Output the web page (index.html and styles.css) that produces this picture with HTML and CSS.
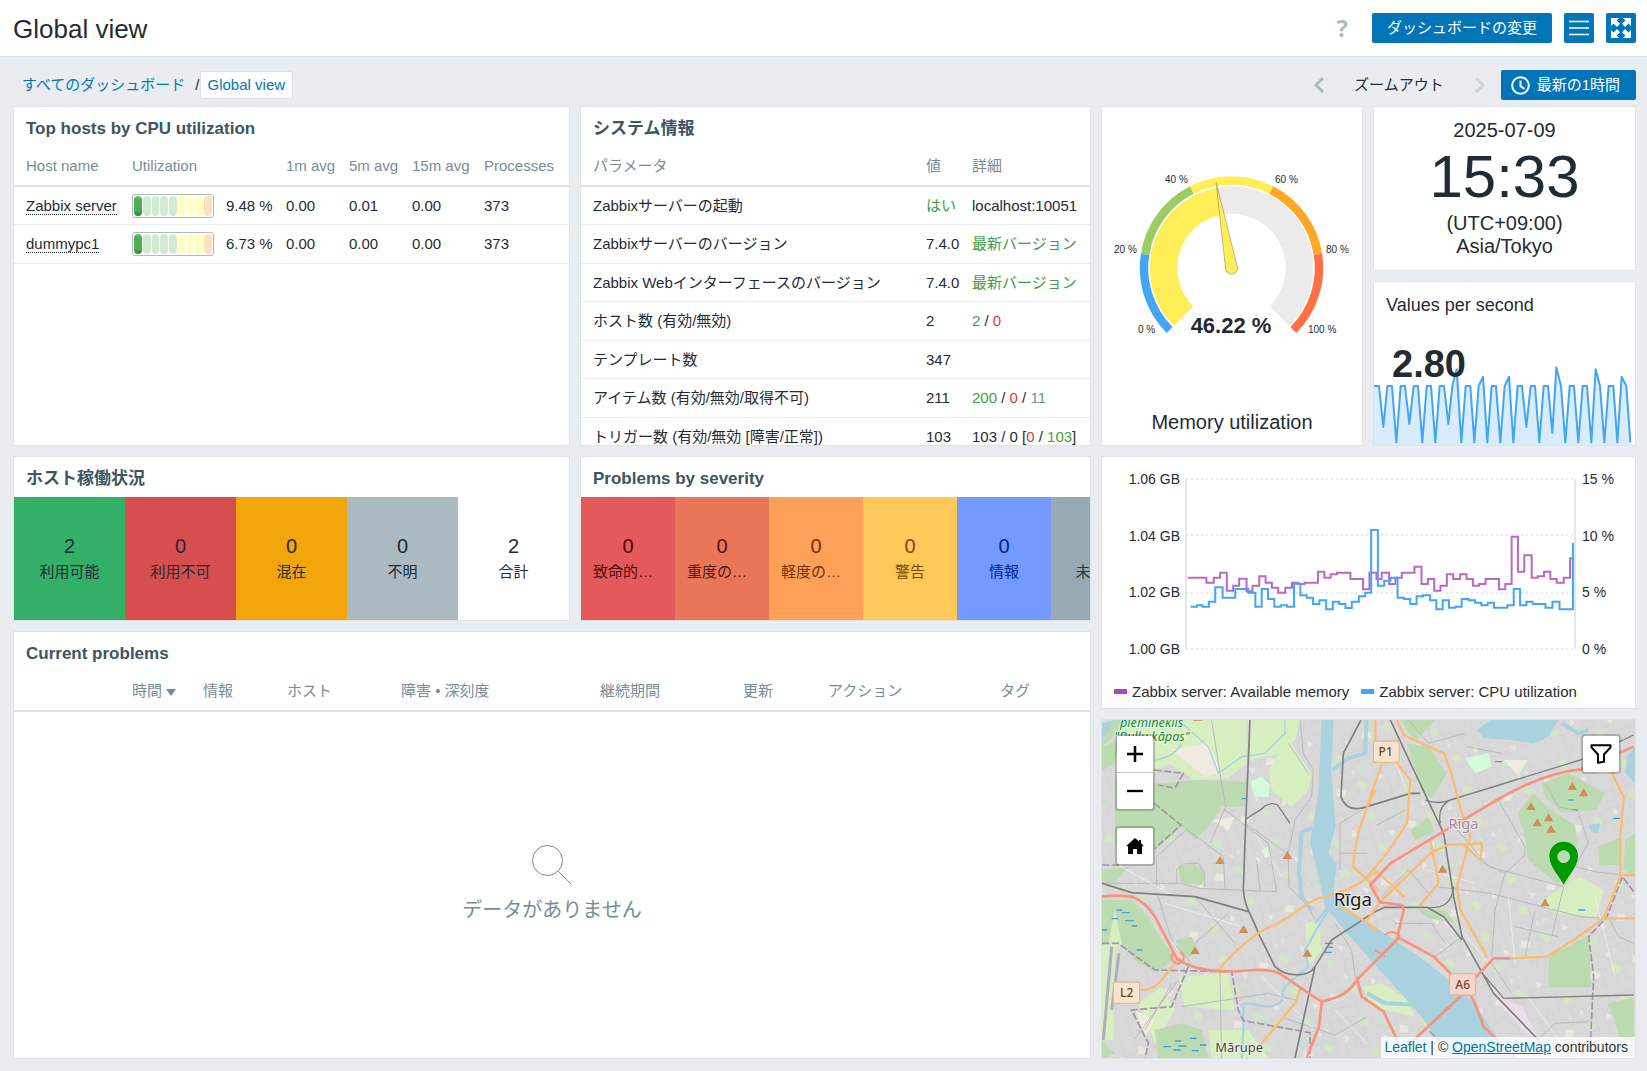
FILE: index.html
```
<!DOCTYPE html>
<html lang="ja">
<head>
    <meta charset="UTF-8">
    <meta name="viewport" content="width=device-width, initial-scale=1.0">
    <title>Global view</title>
    <link rel="stylesheet" href="styles.css">
</head>
<body>
    <header class="topbar">
        <h1>Global view</h1>
        <div class="topbar-actions">
            <a href="#" class="help" aria-label="Help">?</a>
            <button type="button" class="btn">ダッシュボードの変更</button>
            <button type="button" class="btn btn-icon" aria-label="Menu">
                <svg width="20" height="20" viewBox="0 0 20 20"><path d="M0 3.5h20M0 10h20M0 16.5h20" stroke="#fff" stroke-width="1.3"/></svg>
            </button>
            <button type="button" class="btn btn-icon" aria-label="Kiosk mode">
                <svg width="20" height="20" viewBox="0 0 20 20" fill="#fff"><path d="M0 0h8L5.6 2.4 9 5.8 6 9 2.5 5.5 0 8zM20 0v8l-2.5-2.5L14 9l-3-3.2 3.4-3.4L12 0zM0 20v-8l2.5 2.5L6 11l3 3.2-3.4 3.4L8 20zM20 20h-8l2.4-2.4L11 14.2 14 11l3.5 3.5L20 12z"/></svg>
            </button>
        </div>
    </header>

    <div class="subbar">
        <nav class="breadcrumbs">
            <a href="#">すべてのダッシュボード</a>
            <span>/</span>
            <a href="#" class="selected">Global view</a>
        </nav>
        <div class="time-nav">
            <button type="button" class="chevron" aria-label="Previous">
                <svg width="10" height="16" viewBox="0 0 10 16"><path d="M9 1L2 8l7 7" fill="none" stroke="#acbbc2" stroke-width="3"/></svg>
            </button>
            <button type="button" class="zoom-out">ズームアウト</button>
            <button type="button" class="chevron" aria-label="Next" disabled>
                <svg width="10" height="16" viewBox="0 0 10 16"><path d="M1 1l7 7-7 7" fill="none" stroke="#cfd6da" stroke-width="3"/></svg>
            </button>
            <button type="button" class="btn btn-time">
                <svg width="19" height="19" viewBox="0 0 19 19" fill="none" stroke="#fff" stroke-width="2"><circle cx="9.5" cy="9.5" r="8.3"/><path d="M9.5 4.5v5.5l4 3"/></svg>
                最新の1時間
            </button>
        </div>
    </div>

    <main class="dashboard">
        <div class="column column-left">
            <section class="widget">
                <h2>Top hosts by CPU utilization</h2>
                <table class="hosts-table">
                    <thead>
                        <tr><th class="col-host">Host name</th><th class="col-util">Utilization</th><th class="col-avg">1m avg</th><th class="col-avg">5m avg</th><th class="col-avg15">15m avg</th><th>Processes</th></tr>
                    </thead>
                    <tbody>
                        <tr>
                            <td><a href="#" class="host">Zabbix server</a></td>
                            <td><div class="util"><span class="bar"><i class="on"></i><i></i><i></i><i></i><i></i><i class="mid"></i><i class="mid"></i><i class="mid"></i><i class="top"></i></span>9.48 %</div></td>
                            <td>0.00</td><td>0.01</td><td>0.00</td><td>373</td>
                        </tr>
                        <tr>
                            <td><a href="#" class="host">dummypc1</a></td>
                            <td><div class="util"><span class="bar"><i class="on"></i><i></i><i></i><i></i><i></i><i class="mid"></i><i class="mid"></i><i class="mid"></i><i class="top"></i></span>6.73 %</div></td>
                            <td>0.00</td><td>0.00</td><td>0.00</td><td>373</td>
                        </tr>
                    </tbody>
                </table>
            </section>

            <section class="widget">
                <h2>システム情報</h2>
                <table class="system-table">
                    <thead>
                        <tr><th>パラメータ</th><th class="col-value">値</th><th class="col-details">詳細</th></tr>
                    </thead>
                    <tbody>
                        <tr><td>Zabbixサーバーの起動</td><td class="green">はい</td><td>localhost:10051</td></tr>
                        <tr><td>Zabbixサーバーのバージョン</td><td>7.4.0</td><td class="green">最新バージョン</td></tr>
                        <tr><td>Zabbix Webインターフェースのバージョン</td><td>7.4.0</td><td class="green">最新バージョン</td></tr>
                        <tr><td>ホスト数 (有効/無効)</td><td>2</td><td><span class="green">2</span> / <span class="red">0</span></td></tr>
                        <tr><td>テンプレート数</td><td>347</td><td></td></tr>
                        <tr><td>アイテム数 (有効/無効/取得不可)</td><td>211</td><td><span class="green">200</span> / <span class="red">0</span> / <span class="grey">11</span></td></tr>
                        <tr><td>トリガー数 (有効/無効 [障害/正常])</td><td>103</td><td>103 / 0 [<span class="red">0</span> / <span class="green">103</span>]</td></tr>
                    </tbody>
                </table>
            </section>

            <section class="widget">
                <h2>ホスト稼働状況</h2>
                <div class="tiles">
                    <div class="tile available"><b>2</b><span>利用可能</span></div>
                    <div class="tile unavailable"><b>0</b><span>利用不可</span></div>
                    <div class="tile mixed"><b>0</b><span>混在</span></div>
                    <div class="tile unknown"><b>0</b><span>不明</span></div>
                    <div class="tile"><b>2</b><span>合計</span></div>
                </div>
            </section>

            <section class="widget">
                <h2>Problems by severity</h2>
                <div class="tiles severity">
                    <div class="tile disaster"><b>0</b><span>致命的な障害</span></div>
                    <div class="tile high"><b>0</b><span>重度の障害</span></div>
                    <div class="tile average"><b>0</b><span>軽度の障害</span></div>
                    <div class="tile warning"><b>0</b><span>警告</span></div>
                    <div class="tile info"><b>0</b><span>情報</span></div>
                    <div class="tile not-classified"><b>0</b><span>未分類</span></div>
                </div>
            </section>

            <section class="widget problems">
                <h2>Current problems</h2>
                <table class="problems-table">
                    <thead>
                        <tr><th class="p-empty"></th><th class="p-time">時間 <i class="arrow-down"></i></th><th class="p-info">情報</th><th class="p-host">ホスト</th><th class="p-problem">障害 • 深刻度</th><th class="p-duration">継続期間</th><th class="p-update">更新</th><th class="p-actions">アクション</th><th>タグ</th></tr>
                    </thead>
                </table>
                <div class="no-data">
                    <svg width="40" height="40" viewBox="0 0 40 40" fill="none" stroke="#768d99"><circle cx="15.5" cy="15.5" r="15"/><path d="M26.5 26.5L39 39"/></svg>
                    <p>データがありません</p>
                </div>
            </section>
        </div>

        <div class="column column-right">
            <section class="widget gauge">
                <svg viewBox="0 0 260 284">
                    <g transform="translate(129.5 161)" fill="none">
                        <g stroke-width="8.5">
                            <path stroke="#42a5f5" d="M-61.9 61.9A87.5 87.5 0 0 1-86.4-13.7"/>
                            <path stroke="#9ccc65" d="M-86.4-13.7A87.5 87.5 0 0 1-39.7-78"/>
                            <path stroke="#ffee58" d="M-39.7-78A87.5 87.5 0 0 1 39.7-78"/>
                            <path stroke="#ffa726" d="M39.7-78A87.5 87.5 0 0 1 86.4-13.7"/>
                            <path stroke="#ff7043" d="M86.4-13.7A87.5 87.5 0 0 1 61.9 61.9"/>
                        </g>
                        <path stroke="#ebebeb" stroke-width="27.5" d="M-12-66.8A67.8 67.8 0 0 1 48 48"/>
                        <path stroke="#ffee58" stroke-width="27.5" d="M-48 48A67.8 67.8 0 0 1-12-66.8"/>
                        <path fill="#ffee58" stroke="#000" stroke-opacity=".25" d="M0-87L6 0A6 6 0 0 1-6 0z" transform="rotate(-10.2)"/>
                    </g>
                    <g class="gauge-ticks">
                        <text x="36" y="226">0 %</text>
                        <text x="12" y="146">20 %</text>
                        <text x="63" y="76">40 %</text>
                        <text x="173" y="76">60 %</text>
                        <text x="224" y="146">80 %</text>
                        <text x="206" y="226">100 %</text>
                    </g>
                    <text class="gauge-value" x="129" y="226">46.22 %</text>
                </svg>
                <p>Memory utilization</p>
            </section>

            <section class="widget clock">
                <span>2025-07-09</span>
                <strong>15:33</strong>
                <span>(UTC+09:00)</span>
                <span>Asia/Tokyo</span>
            </section>

            <section class="widget item-value">
                <p>Values per second</p>
                <strong>2.80</strong>
                <svg viewBox="27 285 783 239" preserveAspectRatio="none">
                    <path fill="#d9ecfc" d="M27 348H42L55 470 67 348H81L94 516 107 348H120L133 461 146 348H159L172 516 185 348H198L211 516 224 348H237L250 461 262 348 275 298 289 516 302 348H316L328 516 341 348 354 320 367 516 380 348H393L406 516 419 348 432 320 445 516 458 348H471L484 470 497 348H510L523 516 536 348H549L562 488 574 292 588 348 601 516 614 348H627L640 516 653 348H666L679 516 692 298 705 348 718 516 731 348H745L757 516 770 320 784 348 796 524H27z"/>
                    <path class="spark" d="M27 348H42L55 470 67 348H81L94 516 107 348H120L133 461 146 348H159L172 516 185 348H198L211 516 224 348H237L250 461 262 348 275 298 289 516 302 348H316L328 516 341 348 354 320 367 516 380 348H393L406 516 419 348 432 320 445 516 458 348H471L484 470 497 348H510L523 516 536 348H549L562 488 574 292 588 348 601 516 614 348H627L640 516 653 348H666L679 516 692 298 705 348 718 516 731 348H745L757 516 770 320 784 348 796 516"/>
                </svg>
            </section>

            <section class="widget graph">
                <div class="plot">
                    <div class="axis axis-left"><span>1.06 GB</span><span>1.04 GB</span><span>1.02 GB</span><span>1.00 GB</span></div>
                    <svg viewBox="259 88 1105 510" preserveAspectRatio="none">
                        <path class="gridline" d="M259 88H1364M259 256H1364M259 430H1364M259 598H1364"/>
                        <path class="axis-line" d="M259 88V598M1364 88V598"/>
                        <path class="series memory" d="M264 384H317V399H338V384H356V369H375V423H393V408H410V387H431V425H448V408H467V380H485V399H503V414H521V429H541V414H560V399H578V403H596V399H634V366H652V384H670V374H688V369H726V388H762V419H780V369H800V388H815V369H836V403H854V384H872V369H908V351H928V403H946V388H964V423H982V408H1000V374H1018V388H1038V374H1056V388H1074V408H1092V403H1110V388H1148V419H1166V403H1184V261H1202V366H1220V317H1241V384H1258V380H1276V366H1294V388H1312V399H1332V384H1350V326H1358"/>
                        <path class="series cpu" d="M272 471H290V467H306V471H324V456H342V413H363V444H399V418H436V429H456V471H474V418H492V448H510V471H528V467H546V471H566V402H584V437H602V444H620V463H638V452H657V479H676V456H694V463H712V475H730V456H750V440H768V429H785V241H804V408H822V393H840V384H860V444H878V448H896V463H914V440H932V437H952V452H970V479H988V452H1006V474H1024V471H1042V448H1062V452H1080V459H1098V467H1116V459H1134V474H1172V467H1190V418H1208V467H1226V456H1244V463H1280V474H1300V456H1320V479H1358V280"/>
                    </svg>
                    <div class="axis"><span>15 %</span><span>10 %</span><span>5 %</span><span>0 %</span></div>
                </div>
                <div class="legend">
                    <span class="legend-memory">Zabbix server: Available memory</span>
                    <span class="legend-cpu">Zabbix server: CPU utilization</span>
                </div>
            </section>

            <section class="widget map">
                <svg class="map-canvas" viewBox="21 30 1599 1014" preserveAspectRatio="xMidYMid slice">
                    <defs>
                        <pattern id="streets" width="96" height="84" patternUnits="userSpaceOnUse" patternTransform="rotate(-17)">
                            <path d="M0 12H96M0 40H60M30 62H96M14 0V84M44 12V62M72 0V84M0 74H30M86 12V40" stroke="#d1d1d1" stroke-width="2" fill="none"/>
                        </pattern>
                        <pattern id="patches" width="230" height="190" patternUnits="userSpaceOnUse" patternTransform="rotate(24)">
                            <path d="M20 20l22-8 12 16-20 14zM120 60l30 4-6 20-28-6zM180 140l24-10 8 22-26 8z" fill="#d5e6c6"/>
                            <path d="M70 110l26-6 4 18-24 10zM160 14l20 6-8 16zM30 160l20-4v16zM84 40l14 2-2 12z" fill="#ebe8e0"/>
                            <path d="M100 20l12 4-4 10zM60 70l10-2 2 12z" fill="#c9f0d6"/>
                        </pattern>
                    </defs>
                    <path fill="#d9d9d9" d="M21 30H1620V1044H21z"/>
                    <path fill="url(#streets)" d="M21 30H1620V1044H21z"/>
                    <path fill="url(#patches)" d="M21 30H1620V1044H21z"/>

                    <!-- meadows and fields -->
                    <g fill="#d7efc1">
                        <path d="M60 30H455V160L400 205 300 210 220 160 180 190 60 180zM465 30H615L600 90 560 130 465 150zM520 180L580 90 650 190 640 240 590 290 530 240zM21 700L60 600 90 690 60 720 55 990H21zM1326 580L1456 500 1526 540 1506 620 1386 610zM800 830L860 820 940 870 960 920 830 890zM250 800L400 790 420 900 270 890zM130 880L200 830 240 900 180 1000zM340 960H460L520 1044H350zM630 640L670 630 680 720 640 770z"/>
                    </g>
                    <path fill="#f0ece2" d="M230 120L340 100 380 190 330 200zM1226 150H1300L1270 195zM120 900L180 930 150 980zM350 330L420 320 400 360z"/>
                    <path fill="#d3fbdc" d="M465 215L500 200 525 225 520 260 480 262zM500 420L520 410 525 435 510 445zM1000 380L1020 400 1010 425zM1110 145L1180 130 1190 170 1140 190z"/>

                    <!-- forests and parks -->
                    <g fill="#bddbb1">
                        <path d="M21 110L110 30H60L21 60zM21 110L70 90 60 160 21 180zM60 210L200 220 300 210 455 215 450 290 380 290 340 350 300 390 260 350 180 420 60 400zM21 480L100 470 60 520H21zM21 570H110L160 620 200 690 240 740 190 785 130 760 80 700 60 600 40 700H21zM250 470L300 460 330 490 320 525 260 520zM180 960L260 940 320 960 340 1044H190zM240 690L290 680 310 730 270 745zM916 30H1020L960 95zM936 100L1000 110 1056 190 1010 265 980 240zM1340 220L1420 190 1530 250 1505 300 1400 308 1350 260zM1268 310L1316 250 1361 295 1440 345 1446 400 1390 525 1300 450 1290 380zM1510 410L1580 380 1576 465 1512 465zM1590 390L1620 370V500L1585 480zM1361 740L1481 675 1488 832H1361zM1536 880L1616 862V990L1575 1000 1560 930zM946 360L1000 320 1016 365 960 390zM970 600H1050L1090 640 1000 625zM21 990L60 1030 21 1044z"/>
                    </g>

                    <!-- water -->
                    <path fill="#aad3df" d="M680 30L670 250 645 400 672 500 690 590 740 650 800 720 900 830 980 920 1060 1044H1250L1130 870 1000 760 900 690 816 635 760 600 715 545 725 460 700 430 722 350 708 180 716 30zM1146 60L1186 30H1390L1360 80 1316 100 1246 90 1166 85zM1596 140L1620 110V220L1590 190zM21 40L60 30 21 90zM1480 345L1515 340 1510 370 1490 365z"/>
                    <g fill="none" stroke="#aad3df" stroke-linejoin="round">
                        <path stroke-width="12" d="M670 350L620 365 612 480 620 560 650 600M712 180L760 145 810 130 815 30M816 850L870 880 990 885M1400 40L1450 70 1480 60"/>
                        <path stroke-width="7" d="M435 885C480 870 500 900 540 885S550 850 570 830L640 770 630 720 670 650 700 600M445 890V960L440 1044M700 590L660 640"/>
                        <path stroke-width="4" d="M370 190L440 140 510 130 570 70V30M370 190L340 110 250 30M180 150Q240 140 260 100"/>
                    </g>
                    <path stroke="#4a9be8" stroke-width="4" fill="none" d="M65 600h16M80 608h24M50 626h20M90 632h26M110 648h16M21 660h16M125 720h18M240 993h18M285 985h20M205 1010h22M235 1020h22M250 1008h24M315 1005h20M290 1022h22M690 700h24M700 712h14M690 727h20M1200 155h22M1420 270h16M1430 300h18M1450 600h20M1555 325h20M440 266h12"/>

                    <!-- secondary streets -->
                    <g fill="none" stroke="#bcbcbc" stroke-width="3" stroke-linejoin="round">
                        <path d="M350 30L375 190 392 290 345 400M185 530V440L275 358 385 440 390 535M21 520H260L310 535 545 545M245 520V480Q260 455 310 460L328 490V530M615 30L625 130 655 180 650 260 600 330 580 430 582 530 640 590 660 630M580 100L640 190M450 340L590 440M390 300L520 400 545 545M190 560L230 690 290 760M300 560L420 700M230 820L150 960M260 890L520 850 600 870M375 790L380 1044M570 925L720 975 816 920M735 480V340L800 300M735 430H816M780 800L770 720 720 640M485 450L495 540M300 700L400 610M120 985L250 810"/>
                        <path d="M1210 270L1290 410V435L1230 490 1200 600 1190 740M1026 530L1186 550 1456 620 1530 625M1080 350L1180 470 1406 530M1156 455L1230 490M1406 530L1370 680M1260 650L1390 680M1320 600L1290 740M1350 220L1390 290 1450 305 1480 400 1440 470 1500 485 1580 495M846 345L930 300M1020 740L1100 680M1190 760L1250 850M1320 1000L1380 940 1480 935M1540 620L1570 680 1616 700M940 30L1000 100 1110 70M1116 110L1220 130M860 560L940 480 1010 560M900 640H1010L1050 700"/>
                    </g>
                    <path fill="none" stroke="#ffffff" stroke-opacity=".5" stroke-width="3" d="M60 460L240 560M210 580L440 650M480 370L560 500M500 800L660 960M720 900L816 1000M1000 480L1140 520M1060 610L1180 760M1240 560L1260 760M1500 560L1560 800M1290 850L1400 1000M880 100L930 230"/>
                    <path fill="#eadfe9" d="M1036 610L1096 680 1080 670 1050 645zM1166 795L1216 860 1280 890 1345 1010 1300 975 1220 890z"/>

                    <!-- municipal boundaries -->
                    <path fill="none" stroke="#a692ab" stroke-width="5" stroke-dasharray="22 7" d="M178 180L265 190 240 235 190 225M178 280L258 345 180 415M21 465L75 465M21 700H70L110 730 180 780 410 785 430 900 445 932 645 968V1044M280 770L230 890 110 900 160 1000 150 1044M1616 545L1582 500 1536 620 1481 680 1496 800 1486 1000M1040 1000L1000 960"/>
                    <path fill="none" stroke="#b0aebf" stroke-width="9" d="M50 710L25 990M72 730L50 900"/>

                    <!-- railways -->
                    <g fill="none" stroke="#808080" stroke-width="4" stroke-linejoin="round">
                        <path stroke-width="5" d="M465 30L452 340 445 540C450 600 470 610 490 670L540 770C570 800 640 805 660 770L710 690 840 605 870 592H996L1046 620 1101 690M21 520L110 548 300 560 460 605M660 770L600 1044M798 30L745 130 738 260Q755 310 816 290L946 250H976"/>
                        <path d="M450 330C480 305 495 305 510 288Q530 275 548 285L585 340"/>
                        <path stroke-width="5" d="M886 30L956 180 1046 370 1076 560 1101 680 1196 850 1340 1000"/>
                        <path d="M991 270Q1030 285 1066 270L1456 150 1616 75M1066 270Q1026 290 1036 340M996 592Q1070 600 1076 530M1166 795L1226 865 1616 855"/>
                    </g>

                    <!-- main roads -->
                    <g fill="none" stroke="#fabd74" stroke-width="7" stroke-linejoin="round" stroke-linecap="round">
                        <path d="M370 780C420 720 490 660 540 645C620 600 640 570 690 560C780 540 800 510 840 490M250 745L200 810Q170 845 130 840M500 1000L600 880 615 840M841 240Q780 360 775 470L850 540M841 30V90M861 160L816 290M906 30L926 75 1046 130 1066 180 1106 330 1126 380 1086 530 1096 600 1176 740M906 160L946 210 936 340 876 430 816 500M816 630L856 575 1006 430 1056 405 1161 400 1156 450 1106 405M836 475L926 560M1006 390L1031 520 976 585M740 590L850 660M1246 745L1356 740 1436 690 1526 625H1616M1526 625L1576 500V380L1586 260 1551 190M1576 495H1616"/>
                    </g>
                    <g fill="none" stroke="#fa937d" stroke-width="8" stroke-linejoin="round">
                        <path d="M21 560C110 550 140 560 180 620L245 745C300 785 380 790 480 780C560 775 560 800 680 875L672 950 635 1044M680 875C740 860 760 850 790 805L840 755 905 690 926 600 920 585 856 577 826 525 886 460 1036 370 1206 270Q1340 190 1456 178L1616 110M905 680L1016 740 1106 830 1136 870 1166 950 1260 1044M1106 840L1196 745H1246M1106 850L946 1000 900 1030M785 800L800 860 866 905 916 1010"/>
                        <path stroke-width="6" d="M235 730a18 18 0 1 0 20 -4M870 675a14 10 0 1 1 40 15M840 720L870 740"/>
                    </g>

                    <g fill="#d08f55">
                        <path d="M375 438l14 24h-28zM577 423l14 24h-28zM446 645l14 24h-28zM300 708l14 24h-28zM637 716l14 24h-28zM308 8l14 24h-28zM1432 216l14 24h-28zM1466 235l14 24h-28zM1308 276l14 24h-28zM1361 310l14 24h-28zM1327 325l14 24h-28zM1368 344l14 24h-28zM1043 464l14 24h-28zM1350 565l14 24h-28z"/>
                    </g>

                    <g class="map-label">
                        <text class="nature" x="75" y="50">piemineklis</text>
                        <text class="nature" x="58" y="92">"Buļļu kāpas"</text>
                        <text class="city" x="716" y="587">Rīga</text>
                        <text class="region" x="1060" y="357">Rīga</text>
                        <text class="town" x="361" y="1026">Mārupe</text>
                    </g>
                    <g class="shield">
                        <rect x="835" y="93" width="78" height="64" rx="6"/><text x="872" y="137">P1</text>
                        <rect x="55" y="816" width="79" height="64" rx="6"/><text x="95" y="862">L2</text>
                        <rect class="trunk" x="1063" y="791" width="79" height="64" rx="6"/><text x="1103" y="837">A6</text>
                    </g>
                    <path fill="#009900" fill-rule="evenodd" d="M1406 524C1390 495 1363 468 1363 438A43 43 0 0 1 1449 438C1449 468 1422 495 1406 524zM1406 421a19 19 0 1 0 .1 0z"/>
                </svg>

                <div class="map-controls">
                    <div class="map-group">
                        <button type="button" aria-label="Zoom in"><svg width="16" height="16" viewBox="0 0 16 16"><path d="M0 8h16M8 0v16" stroke="#000" stroke-width="2.5"/></svg></button>
                        <button type="button" aria-label="Zoom out"><svg width="16" height="16" viewBox="0 0 16 16"><path d="M0 8h16" stroke="#000" stroke-width="2.3"/></svg></button>
                    </div>
                    <div class="map-group">
                        <button type="button" aria-label="Home"><svg width="18" height="16" viewBox="0 0 18 16"><path d="M9 0l4 3.5V2h2v3.3L18 8.3h-2V16h-5v-5H7v5H2V8.3H0z"/></svg></button>
                    </div>
                </div>
                <div class="map-group map-filter">
                    <button type="button" aria-label="Filter"><svg width="22" height="20" viewBox="0 0 22 20"><path d="M1.5 1.3h19v2L14 10.5v7.2l-6 1V10.5L1.5 3.3z" fill="none" stroke="#000" stroke-width="2" stroke-linejoin="round"/></svg></button>
                </div>
                <div class="attribution"><a href="#">Leaflet</a> | © <a href="#" class="osm">OpenStreetMap</a> contributors</div>
            </section>
        </div>
    </main>
</body>
</html>
```
FILE: styles.css
```
* {
    margin: 0;
    padding: 0;
    box-sizing: border-box;
}

body {
    font-family: "Liberation Sans", "Noto Sans CJK JP", sans-serif;
    font-size: 15px;
    line-height: 20px;
    background: #e9edf0;
    color: #1f2c33;
}

button {
    font: inherit;
    border: none;
    background: none;
    cursor: pointer;
}

a {
    color: #0275b8;
    text-decoration: none;
}

svg {
    display: block;
}

/* Header */
.topbar {
    display: flex;
    justify-content: space-between;
    align-items: center;
    height: 57px;
    padding: 0 11px 0 13px;
    background: #ffffff;
    border-bottom: 1px solid #dfe4e7;
}

.topbar h1 {
    padding-top: 2px;
    font-size: 26px;
    font-weight: normal;
    line-height: 32px;
}

.topbar-actions {
    display: flex;
    align-items: center;
    gap: 12px;
}

.help {
    margin-right: 12px;
    font-family: "Open Sans", sans-serif;
    font-size: 24px;
    font-weight: bold;
    color: #acbbc2;
}

.btn {
    height: 30px;
    padding: 0 15px;
    color: #ffffff;
    background: #0275b8;
    border-radius: 2px;
}

.btn-icon {
    width: 30px;
    padding: 0 5px;
}

.subbar {
    display: flex;
    justify-content: space-between;
    padding: 13px 11px 6px 22px;
}

.breadcrumbs {
    display: flex;
    align-items: center;
}

.breadcrumbs span {
    margin-left: 10px;
}

.breadcrumbs .selected {
    padding: 3px 7px;
    background: #ffffff;
    border: 1px solid #dfe4e7;
    border-radius: 2px;
}

.time-nav {
    display: flex;
    align-items: center;
}

.chevron {
    padding: 0 3px;
}

.zoom-out {
    margin: 0 28px 0 27px;
    color: #1f2c33;
}

.btn-time {
    display: flex;
    align-items: center;
    gap: 7px;
    margin-left: 13px;
    padding: 0 16px 0 10px;
}

/* Dashboard grid */
.dashboard {
    display: grid;
    grid-template-columns: 1078fr 535fr;
    gap: 10px;
    padding: 0 11px 12px 13px;
}

.column {
    display: grid;
    gap: 10px;
    min-width: 0;
}

.column-left {
    grid-template-columns: 557fr 511fr;
    grid-template-rows: 340px 165px 1fr;
}

.column-right {
    grid-template-columns: 262fr 263fr;
    grid-template-rows: 165px 165px 253px 340px;
}

.widget {
    display: flex;
    flex-direction: column;
    min-width: 0;
    overflow: hidden;
    background: #ffffff;
    border: 1px solid #dfe4e7;
}

.widget h2 {
    flex: none;
    padding: 4px 12px 0;
    font-size: 17px;
    line-height: 36px;
    color: #3c5563;
}

/* Tables */
table {
    width: 100%;
    table-layout: fixed;
    border-collapse: separate;
    border-spacing: 0;
}

th, td {
    height: 38px;
    padding: 0 0 0 6px;
    text-align: left;
    white-space: nowrap;
    border-bottom: 1px solid #ebeef0;
}

th:first-child, td:first-child {
    padding-left: 12px;
}

tr:nth-child(even) td {
    height: 39px;
}

th {
    height: 40px;
    font-weight: normal;
    color: #768d99;
    border-bottom: 2px solid #dfe4e7;
}

.col-host { width: 112px; }
.col-util { width: 154px; }
.col-avg { width: 63px; }
.col-avg15 { width: 72px; }
.col-value { width: 46px; }
.col-details { width: 124px; }

.host {
    color: #1f2c33;
    border-bottom: 1px dotted #1f2c33;
}

.util {
    display: flex;
    align-items: center;
    gap: 12px;
}

.bar {
    display: flex;
    gap: 1px;
    width: 82px;
    height: 24px;
    padding: 1px;
    border: 1px solid #acbbc2;
    border-radius: 3px;
}

.bar i {
    flex: 1;
    border-radius: 4px;
    background: #d1ebd2;
}

.bar .on { background: linear-gradient(#6abf6d, #4caf50 20%, #4caf50 75%, #2f7d33); }
.bar .mid { background: #ffffbf; }
.bar .top { background: #ffdfc2; }

.green { color: #429e47; }
.red { color: #e33734; }
.grey { color: #768d99; }

/* Tiles */
.tiles {
    display: flex;
    flex: 1;
}

.tile {
    display: flex;
    flex: 1;
    flex-direction: column;
    align-items: center;
    justify-content: center;
    min-width: 0;
    padding: 0 12px;
}

.tile b {
    font-size: 20px;
    font-weight: normal;
    line-height: 26px;
}

.tile span {
    width: 100%;
    line-height: 26px;
    text-align: center;
    overflow: hidden;
    text-overflow: ellipsis;
    white-space: nowrap;
}

/* six tiles do not fit, the last one is clipped by the widget */
.severity .tile {
    flex: none;
    width: 94px;
}

.available { background: #34af67; }
.unavailable { background: #d64e4e; }
.mixed { background: #f2a60c; }
.unknown { background: #abbac1; }
.disaster { background: #e45959; color: #4b0c0c; }
.high { background: #e97659; color: #52190b; }
.average { background: #ffa059; color: #733100; }
.warning { background: #ffc859; color: #734e00; }
.info { background: #7499ff; color: #00268e; }
.not-classified { background: #97aab3; color: #2c373c; }

/* Problems */
.problems {
    grid-column: span 2;
}

.p-empty { width: 112px; }
.p-time { width: 71px; }
.p-info { width: 84px; }
.p-host { width: 114px; }
.p-problem { width: 199px; }
.p-duration { width: 143px; }
.p-update { width: 85px; }
.p-actions { width: 172px; }

.arrow-down {
    display: inline-block;
    border: 5px solid transparent;
    border-top: 7px solid #768d99;
    border-bottom: none;
}

.no-data {
    display: flex;
    flex: 1;
    flex-direction: column;
    align-items: center;
    justify-content: center;
    gap: 10px;
    color: #768d99;
    font-size: 20px;
    line-height: 30px;
}

/* Gauge */
.gauge {
    grid-row: span 2;
    text-align: center;
    font-size: 20px;
}

.gauge svg {
    flex: none;
    width: 100%;
    height: 284px;
}

.gauge p {
    padding-top: 8px;
    line-height: 46px;
}

.gauge text {
    fill: #1f2c33;
}

.gauge-ticks {
    font-size: 10px;
}

.gauge-value {
    font-size: 22px;
    font-weight: bold;
    text-anchor: middle;
}

/* Clock */
.clock {
    align-items: center;
    justify-content: center;
    font-size: 20px;
    line-height: 23px;
}

.clock strong {
    font-size: 60px;
    font-weight: normal;
    line-height: 70px;
}

/* Item value */
.item-value {
    position: relative;
    padding: 12px 0 0;
}

.item-value p {
    padding-left: 12px;
    font-size: 18px;
    line-height: 22px;
}

.item-value strong {
    z-index: 1;
    margin-top: 28px;
    padding-left: 18px;
    font-size: 38px;
    line-height: 40px;
}

.item-value svg {
    position: absolute;
    left: 0;
    bottom: 0;
    width: 100%;
    height: 80px;
}

.spark {
    fill: none;
    stroke: #42a5f5;
    stroke-width: 2px;
    stroke-linejoin: round;
    vector-effect: non-scaling-stroke;
}

/* Graph */
.graph {
    grid-column: span 2;
    justify-content: space-between;
    padding: 14px 12px 6px;
}

.plot {
    display: flex;
    height: 186px;
    font-size: 14px;
    line-height: 16px;
}

.plot svg {
    flex: 1;
    min-width: 0;
    height: 170px;
    margin: 8px 7px 8px 6px;
    overflow: visible;
}

.plot path {
    fill: none;
    vector-effect: non-scaling-stroke;
}

.axis {
    display: flex;
    flex-direction: column;
    justify-content: space-between;
    width: 41px;
}

.axis-left {
    width: 66px;
    text-align: right;
}

.gridline {
    stroke: #cfd6da;
    stroke-dasharray: 2 3;
}

.axis-line {
    stroke: #c6d0d5;
}

.plot .series {
    stroke-width: 2px;
}

.memory { stroke: #ba68c8; }
.cpu { stroke: #42a5f5; }

.legend {
    display: flex;
    gap: 12px;
}

.legend span::before {
    content: "";
    display: inline-block;
    width: 13px;
    height: 5px;
    margin-right: 5px;
    vertical-align: 3px;
    background: #ab47bc;
}

.legend .legend-cpu::before {
    background: #42a5f5;
}

/* Map */
.map {
    position: relative;
    grid-column: span 2;
}

.map-canvas {
    width: 100%;
    height: 100%;
}

.map-label {
    font-family: "Noto Sans", sans-serif;
    stroke: #ffffff;
    stroke-opacity: 0.6;
    stroke-width: 6px;
    paint-order: stroke;
}

.city { font-size: 56px; fill: #222222; }
.region { font-size: 44px; fill: #a687ad; }
.town { font-size: 39px; fill: #444444; }

.nature {
    font-size: 38px;
    font-style: italic;
    fill: #118833;
}

.shield {
    font-family: "Noto Sans", sans-serif;
    font-size: 36px;
    font-weight: 500;
    text-anchor: middle;
    fill: #6b4a2a;
}

.shield rect {
    fill: #f7e4cf;
    stroke: #dcbf99;
    stroke-width: 4px;
}

.shield .trunk {
    fill: #f5d5cd;
}

.map-controls {
    position: absolute;
    top: 14px;
    left: 13px;
    display: flex;
    flex-direction: column;
    gap: 15px;
}

.map-group {
    background: #ffffff;
    background-clip: padding-box;
    border: 2px solid rgba(0, 0, 0, 0.2);
    border-radius: 4px;
}

.map-group button {
    display: flex;
    align-items: center;
    justify-content: center;
    width: 36px;
    height: 36px;
}

.map-group button + button {
    height: 37px;
    border-top: 1px solid #cccccc;
}

.map-filter {
    position: absolute;
    top: 14px;
    right: 14px;
}

.attribution {
    position: absolute;
    right: 0;
    bottom: 0;
    padding: 0 7px 0 3px;
    font-size: 14px;
    line-height: 21px;
    color: #333333;
    background: rgba(255, 255, 255, 0.8);
}

.attribution a {
    color: #0078a8;
}

.attribution .osm {
    text-decoration: underline;
}
```
